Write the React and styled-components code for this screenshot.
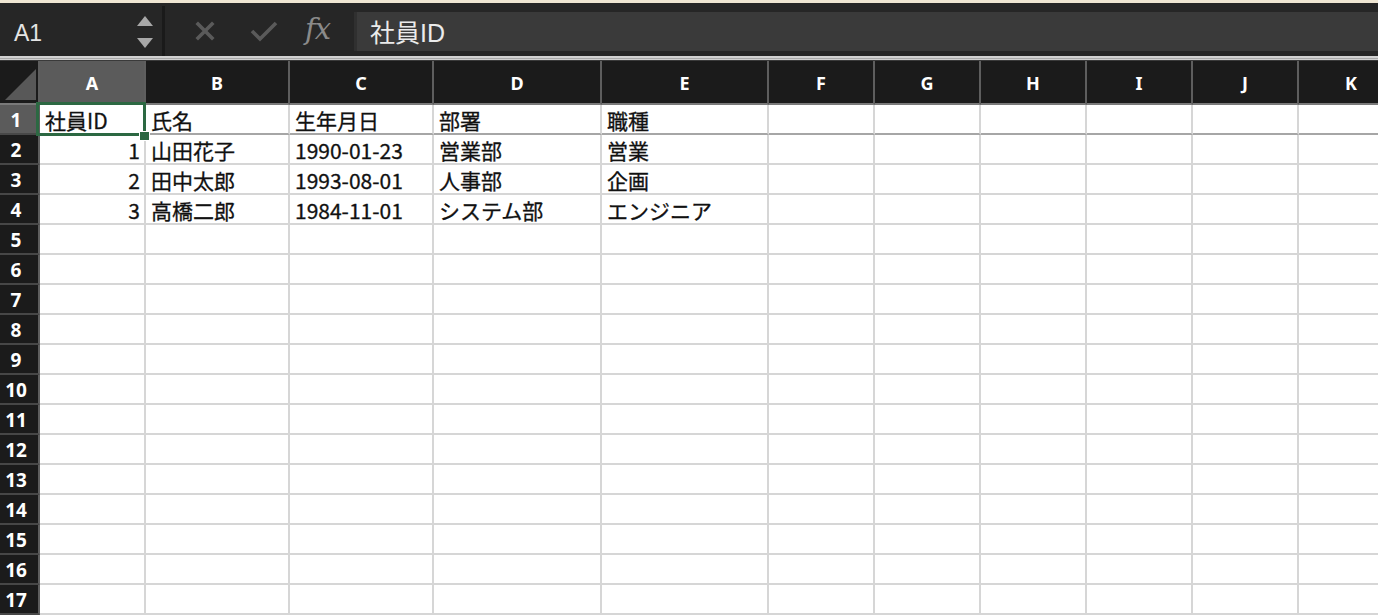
import styled, { createGlobalStyle } from "styled-components";

const GlobalStyle = createGlobalStyle`
  html, body {
    margin: 0;
    padding: 0;
    background: #ffffff;
    overflow: hidden;
  }
  * {
    box-sizing: border-box;
  }
`;

const COLUMNS = [
  { key: "A", width: 106 },
  { key: "B", width: 144 },
  { key: "C", width: 144 },
  { key: "D", width: 168 },
  { key: "E", width: 167 },
  { key: "F", width: 106 },
  { key: "G", width: 106 },
  { key: "H", width: 106 },
  { key: "I", width: 106 },
  { key: "J", width: 106 },
  { key: "K", width: 106 },
];

const ROW_COUNT = 17;

// values by row number, numbers are right aligned like Excel
const DATA = {
  1: ["社員ID", "氏名", "生年月日", "部署", "職種"],
  2: [1, "山田花子", "1990-01-23", "営業部", "営業"],
  3: [2, "田中太郎", "1993-08-01", "人事部", "企画"],
  4: [3, "高橋二郎", "1984-11-01", "システム部", "エンジニア"],
};

const Page = styled.div`
  width: 1378px;
  height: 616px;
  display: flex;
  flex-direction: column;
  overflow: hidden;
  background: #ffffff;
`;

const TopStrip = styled.div`
  height: 3px;
  flex: none;
  background: #efe6d3;
`;

const FormulaBar = styled.div`
  height: 53px;
  flex: none;
  display: flex;
  align-items: stretch;
  background: #262626;
`;

const NameBox = styled.div`
  width: 162px;
  flex: none;
  display: flex;
  align-items: center;
  justify-content: space-between;
  padding: 7px 8px 0 14px;
  color: #e4e4e4;
  font-family: "Liberation Sans", Arial, sans-serif;
  font-size: 23px;
`;

const Stepper = styled.svg`
  width: 18px;
  height: 36px;
  margin-top: -3px;
`;

const Divider = styled.div`
  width: 3px;
  flex: none;
  margin-top: 3px;
  background: #1a1a1a;
`;

const ActionArea = styled.div`
  width: 189px;
  flex: none;
  display: flex;
  align-items: center;
  padding-left: 30px;
`;

const ActionIcon = styled.svg`
  width: ${(p) => p.$w}px;
  height: 22px;
  margin-right: ${(p) => p.$gap}px;
  margin-top: 2px;
`;

const FxLabel = styled.span`
  font-family: "DejaVu Serif", "Liberation Serif", serif;
  font-style: italic;
  font-size: 29px;
  letter-spacing: -1px;
  color: #8a8a8a;
  line-height: 1;
  margin-top: -1px;
`;

const FormulaInput = styled.div`
  flex: 1;
  margin: 9px 0 5px 0;
  display: flex;
  align-items: center;
  padding: 0 0 2px 13px;
  background: #3a3a3a;
  border-left: 3px solid #303030;
  color: #ebebeb;
  font-family: "Liberation Sans", "Noto Sans CJK JP", sans-serif;
  font-size: 25px;
`;

const Separator = styled.div`
  height: 5px;
  flex: none;
  background: linear-gradient(
    to bottom,
    #d2d2d2 0,
    #d2d2d2 2px,
    #a9a9a9 2px,
    #a9a9a9 3px,
    #cfcfcf 3px,
    #cfcfcf 4px,
    #3a3a3a 4px
  );
`;

const Sheet = styled.div`
  display: grid;
  grid-template-columns: 40px ${COLUMNS.map((c) => `${c.width}px`).join(" ")};
  grid-template-rows: 44px repeat(${ROW_COUNT}, 30px);
  width: max-content;
`;

const Corner = styled.div`
  background: #1b1b1b;
  border-right: 2px solid #5e5e5e;
  border-bottom: 2px solid #7a7a7a;
  display: flex;
  align-items: flex-end;
  justify-content: flex-end;
  padding: 0 2px 3px 0;
`;

const ColHeader = styled.div`
  background: ${(p) => (p.$active ? "#5b5b5b" : "#1b1b1b")};
  border-right: 2px solid #5e5e5e;
  border-bottom: 2px solid #7a7a7a;
  color: #ffffff;
  display: flex;
  align-items: center;
  justify-content: center;
  font-family: "Noto Sans", "Liberation Sans", sans-serif;
  font-weight: 700;
  font-size: 18px;
  padding-top: 2px;
`;

const RowHeader = styled.div`
  background: ${(p) => (p.$active ? "#5b5b5b" : "#1b1b1b")};
  border-right: 2px solid #5e5e5e;
  border-bottom: 2px solid #474747;
  color: #ffffff;
  display: flex;
  align-items: center;
  justify-content: center;
  padding: 1px 6px 0 0;
  font-family: "Noto Sans", "Liberation Sans", sans-serif;
  font-weight: 700;
  font-size: 19px;
`;

const Cell = styled.div`
  position: relative;
  border-right: 2px solid #d6d6d6;
  border-bottom: 2px solid ${(p) => (p.$frozen ? "#a6a6a6" : "#d6d6d6")};
  display: flex;
  align-items: center;
  justify-content: ${(p) => (p.$number ? "flex-end" : "flex-start")};
  padding: 2px 4px 0 5px;
  color: #111111;
  font-family: "Noto Sans CJK JP", "Liberation Sans", sans-serif;
  font-size: 21px;
  -webkit-text-stroke: 0.3px #111111;
  white-space: nowrap;
`;

const Selection = styled.div`
  position: absolute;
  z-index: 5;
  top: -3px;
  left: -4px;
  right: -2px;
  bottom: -3px;
  border: 3px solid #2c6842;
  pointer-events: none;
`;

const FillHandle = styled.div`
  position: absolute;
  right: -7px;
  bottom: -8px;
  width: 11px;
  height: 10px;
  background: #2c6842;
  border: 1px solid #ffffff;
`;

function CornerTriangle() {
  return (
    <svg width="31" height="31" viewBox="0 0 30 30">
      <polygon points="30,0 30,30 0,30" fill="#585858" />
    </svg>
  );
}

function App() {
  const $columnHeaders = COLUMNS.map((column) => (
    <ColHeader key={column.key} $active={column.key === "A"}>
      {column.key}
    </ColHeader>
  ));

  const $rows = [];
  for (let row = 1; row <= ROW_COUNT; row++) {
    const values = DATA[row] || [];
    $rows.push(
      <RowHeader key={`h${row}`} $active={row === 1}>
        {row}
      </RowHeader>
    );
    COLUMNS.forEach((column, index) => {
      const value = values[index];
      const isSelected = row === 1 && index === 0;
      $rows.push(
        <Cell key={`${column.key}${row}`} $number={typeof value === "number"} $frozen={row === 1}>
          {value}
          {isSelected && (
            <Selection>
              <FillHandle />
            </Selection>
          )}
        </Cell>
      );
    });
  }

  return (
    <Page>
      <GlobalStyle />
      <TopStrip />
      <FormulaBar>
        <NameBox>
          A1
          <Stepper viewBox="0 0 18 36">
            <polygon points="9,2 17,12 1,12" fill="#a8a8a8" />
            <polygon points="1,24 17,24 9,34" fill="#a8a8a8" />
          </Stepper>
        </NameBox>
        <Divider />
        <ActionArea>
          <ActionIcon $w={20} $gap={34} viewBox="0 0 20 20">
            <path d="M3 3 L17 17 M17 3 L3 17" stroke="#5a5a5a" strokeWidth="3.6" strokeLinecap="square" fill="none" />
          </ActionIcon>
          <ActionIcon $w={30} $gap={26} viewBox="0 0 30 22">
            <path d="M3 11 L11 19 L27 3" stroke="#5a5a5a" strokeWidth="3.6" fill="none" />
          </ActionIcon>
          <FxLabel>fx</FxLabel>
        </ActionArea>
        <FormulaInput>社員ID</FormulaInput>
      </FormulaBar>
      <Separator />
      <Sheet>
        <Corner>
          <CornerTriangle />
        </Corner>
        {$columnHeaders}
        {$rows}
      </Sheet>
    </Page>
  );
}

export default App;
